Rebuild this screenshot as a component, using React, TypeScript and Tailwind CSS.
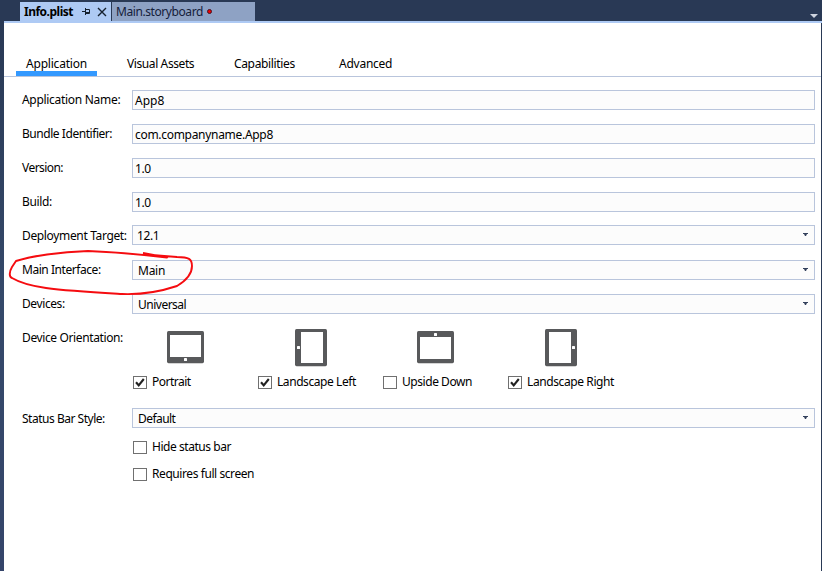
import React from "react";

type BoxProps = { label: string; value: string; select?: boolean; pad?: string; labelClass?: string; valueClass?: string };

function Field({ label, value, select = false, pad = "pl-[2px]", labelClass = "", valueClass = "" }: BoxProps) {
  return (
    <div className="flex h-5 items-center">
      <div className={`w-[110px] shrink-0 whitespace-nowrap ${labelClass}`}>{label}</div>
      <div className={`flex h-5 w-[683px] items-center justify-between border border-[#b9c5dc] bg-[#fcfcfc] pr-[6px] ${pad}`}>
        <span className={`pt-px ${valueClass}`}>{value}</span>
        {select && (
          <svg width="5" height="3" viewBox="0 0 5 3" className="-mt-px">
            <path d="M0 0H5V1H4L3 3H2L1 1H0Z" fill="#34415c" />
          </svg>
        )}
      </div>
    </div>
  );
}

function Check({ label, checked = false, textClass = "" }: { label: string; checked?: boolean; textClass?: string }) {
  return (
    <div className="flex h-[14px] items-center gap-[5px] whitespace-nowrap">
      <span className="flex h-[13px] w-[14px] items-center justify-center border border-[#707070] bg-white">
        {checked && (
          <svg width="12" height="11" viewBox="0 0 12 11">
            <path d="M2 5.3L4.7 8.3L9.8 2" fill="none" stroke="#222" strokeWidth="2.1" />
          </svg>
        )}
      </span>
      <span className={textClass}>{label}</span>
    </div>
  );
}

type Kind = "down" | "left" | "up" | "right";

function Tablet({ kind }: { kind: Kind }) {
  const wide = kind === "down" || kind === "up";
  const screen = {
    down: [3, 4, 31, 22],
    up: [3, 6, 31, 22],
    left: [6, 3, 22, 31],
    right: [4, 3, 22, 31],
  }[kind];
  const dot = { down: [17, 27], up: [17, 2], left: [2, 17], right: [27, 17] }[kind];
  return (
    <svg width={wide ? 37 : 32} height={wide ? 33 : 38} viewBox={wide ? "0 0 37 33" : "0 0 32 38"} className={wide ? "mt-[2px]" : ""}>
      <rect x="1" y="2" width={wide ? 35 : 30} height={wide ? 31 : 36} rx="1" fill="#d4d4d4" />
      <rect width={wide ? 37 : 32} height={wide ? 32 : 37} rx="1.5" fill="#58595b" />
      <rect x={screen[0]} y={screen[1]} width={screen[2]} height={screen[3]} fill="#fff" />
      <rect x={dot[0]} y={dot[1]} width="3" height="3" rx=".6" fill="#fff" />
    </svg>
  );
}

function Device({ kind, label, checked, textClass }: { kind: Kind; label: string; checked?: boolean; textClass: string }) {
  const wide = kind === "down" || kind === "up";
  return (
    <div className="w-[125px]">
      <div className={`flex h-[38px] items-start ${wide ? "pl-[34px]" : "pl-[37px]"}`}>
        <Tablet kind={kind} />
      </div>
      <div className="mt-[8px]">
        <Check label={label} checked={checked} textClass={textClass} />
      </div>
    </div>
  );
}

export default function App() {
  return (
    <div className="relative flex h-[571px] w-[822px] flex-col overflow-hidden bg-[#293955] font-['Noto_Sans','Open_Sans',sans-serif] text-[12px] leading-[16px] text-black">
      <header className="flex h-[21px] items-end pl-5">
        <div className="flex h-[19px] w-[91px] items-center bg-[#aecaf4] pl-1">
          <span className="w-[58px] whitespace-nowrap pt-px font-bold tracking-[-0.5px]">Info.plist</span>
          <svg width="8" height="7" viewBox="0 0 8 7" className="shrink-0">
            <path d="M0 3.5H3M3.5 0V7M3.5 1.5H7.5V5.5M3.5 4.5H7.5M3.5 5.5H7.5" fill="none" stroke="#15202f" />
          </svg>
          <svg width="10" height="10" viewBox="0 0 10 10" className="ml-[7px] shrink-0">
            <path d="M1 1L9 9M9 1L1 9" stroke="#15202f" strokeWidth="1.4" />
          </svg>
        </div>
        <div className="ml-px flex h-[19px] w-[143px] items-center bg-[#8ea2c4] pl-1 text-[#14203a]">
          <span className="w-[91px] whitespace-nowrap pt-px tracking-[-0.42px]">Main.storyboard</span>
          <span className="size-[5px] rounded-full border border-[#441322] bg-[#f00000]" />
        </div>
        <svg width="8" height="4" viewBox="0 0 8 4" className="mb-[3px] ml-[555px]">
          <path d="M0 0H8L4 4Z" fill="#ced4df" />
        </svg>
      </header>
      <div className="ml-1 h-[2px] bg-[#aecaf4]" />
      <div className="flex min-h-0 flex-1">
        <div className="w-1 bg-linear-to-b from-[#293955] via-[#35496a] to-[#35456a]" />
        <main className="w-[817px] bg-white">
          <nav className="flex h-[54px] items-end border-b border-[#b9c5dc] pl-3 whitespace-nowrap">
            <div className="h-[20px] w-[81px] border-b-[5px] border-[#3399ff] pl-[10px] tracking-[-0.2px]">Application</div>
            <div className="ml-[30px] h-[20px] w-[107px] tracking-[-0.4px]">Visual Assets</div>
            <div className="h-[20px] w-[105px] tracking-[-0.35px]">Capabilities</div>
            <div className="h-[20px] tracking-[-0.25px]">Advanced</div>
          </nav>
          <section className="flex flex-col pt-[13px] pl-[18px]">
            <div className="flex flex-col gap-[14px]">
              <Field label="Application Name:" value="App8" labelClass="tracking-[-0.3px]" />
              <Field label="Bundle Identifier:" value="com.companyname.App8" labelClass="tracking-[-0.45px]" valueClass="tracking-[-0.3px]" />
              <Field label="Version:" value="1.0" labelClass="tracking-[-0.55px]" valueClass="tracking-[-0.4px]" />
              <Field label="Build:" value="1.0" labelClass="tracking-[-0.35px]" valueClass="tracking-[-0.4px]" />
            </div>
            <div className="mt-[13px] flex flex-col">
              <Field label="Deployment Target:" value="12.1" select pad="pl-[4px]" labelClass="pt-[2px] tracking-[-0.35px]" valueClass="tracking-[-0.4px]" />
              <div className="h-[15px]" />
              <Field label="Main Interface:" value="Main" select pad="pl-[5px]" labelClass="tracking-[-0.45px]" valueClass="tracking-[-0.25px]" />
              <div className="h-[14px]" />
              <Field label="Devices:" value="Universal" select pad="pl-[5px]" labelClass="tracking-[-0.4px]" valueClass="tracking-[-0.5px]" />
            </div>
            <div className="mt-[15px] flex h-[60px]">
              <div className="mt-px w-[111px] tracking-[-0.38px] whitespace-nowrap">Device Orientation:</div>
              <Device kind="down" label="Portrait" checked textClass="tracking-[-0.5px]" />
              <Device kind="left" label="Landscape Left" checked textClass="tracking-[-0.43px]" />
              <Device kind="up" label="Upside Down" textClass="tracking-[-0.45px]" />
              <Device kind="right" label="Landscape Right" checked textClass="tracking-[-0.4px]" />
            </div>
            <div className="mt-[19px]">
              <Field label="Status Bar Style:" value="Default" select pad="pl-[5px]" labelClass="pt-[2px] tracking-[-0.48px]" valueClass="tracking-[-0.55px]" />
            </div>
            <div className="mt-[12px] ml-[111px] flex flex-col gap-[13px]">
              <Check label="Hide status bar" textClass="tracking-[-0.45px]" />
              <Check label="Requires full screen" textClass="tracking-[-0.42px]" />
            </div>
          </section>
        </main>
      </div>
      <svg className="pointer-events-none absolute top-[245px] left-0" width="200" height="55" viewBox="0 245 200 55">
        <path d="M143 253L167 257.5C146 255 112 252 88 251C60 252 31 256 16 261L12 267C9 272 9 277 12 278C22 284 32 286 46 288C68 291 96 292.5 122 294C148 295 165 290 177 286C187 280 192 273 192 266C192 259 189 257 177 257L146 254.5" fill="none" stroke="#f50c10" strokeWidth="1.9" strokeLinejoin="round" />
      </svg>
    </div>
  );
}
